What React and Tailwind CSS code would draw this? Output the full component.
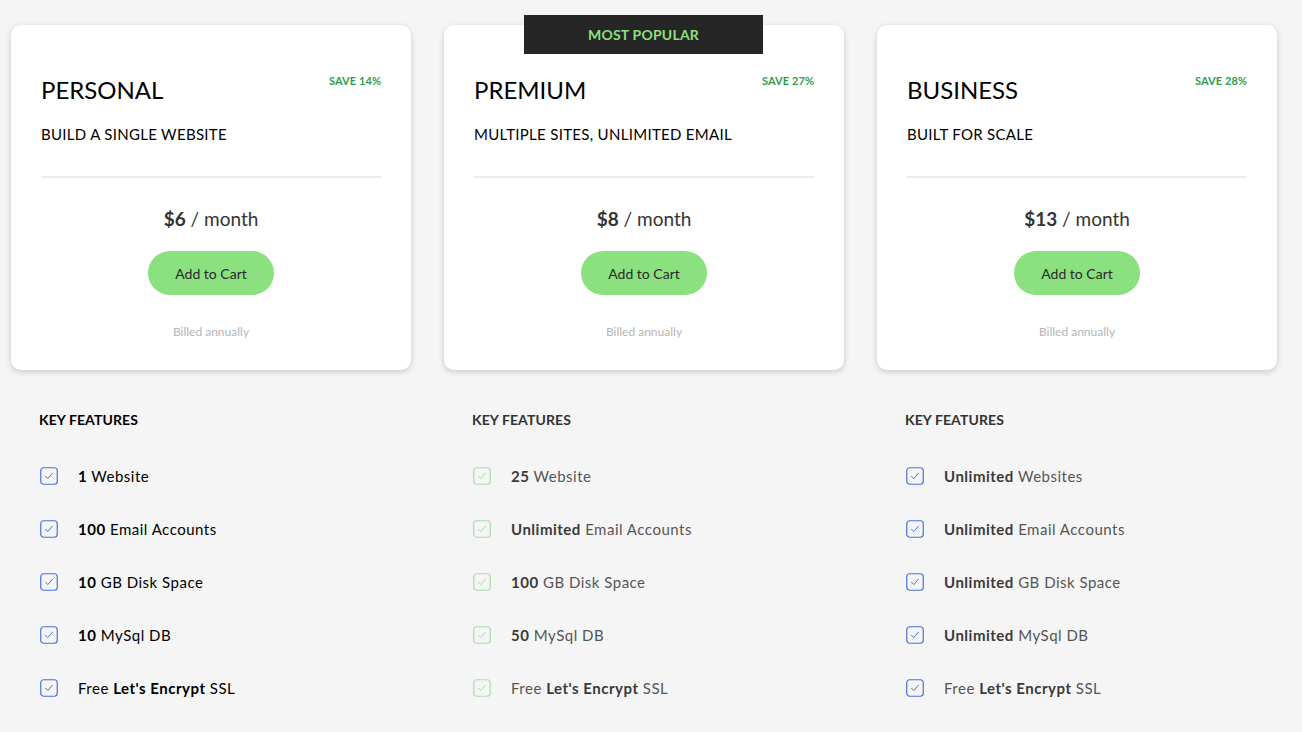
import React from "react";

const plans = [
  {
    name: "PERSONAL",
    tagline: "BUILD A SINGLE WEBSITE",
    save: "SAVE 14%",
    price: "$6",
    popular: false,
    tone: "dark",
    features: [
      ["1", " Website"],
      ["100", " Email Accounts"],
      ["10", " GB Disk Space"],
      ["10", " MySql DB"],
      [null, "Free ", "Let's Encrypt", " SSL"],
    ],
  },
  {
    name: "PREMIUM",
    tagline: "MULTIPLE SITES, UNLIMITED EMAIL",
    save: "SAVE 27%",
    price: "$8",
    popular: true,
    tone: "green",
    features: [
      ["25", " Website"],
      ["Unlimited", " Email Accounts"],
      ["100", " GB Disk Space"],
      ["50", " MySql DB"],
      [null, "Free ", "Let's Encrypt", " SSL"],
    ],
  },
  {
    name: "BUSINESS",
    tagline: "BUILT FOR SCALE",
    save: "SAVE 28%",
    price: "$13",
    popular: false,
    tone: "blue",
    features: [
      ["Unlimited", " Websites"],
      ["Unlimited", " Email Accounts"],
      ["Unlimited", " GB Disk Space"],
      ["Unlimited", " MySql DB"],
      [null, "Free ", "Let's Encrypt", " SSL"],
    ],
  },
];

const Check = ({ green }) => (
  <svg width="18" height="18" viewBox="0 0 18 18" fill="none" className="shrink-0">
    <rect
      x="0.75"
      y="0.75"
      width="16.5"
      height="16.5"
      rx="3"
      stroke={green ? "#a6dfa6" : "#4a72d6"}
      strokeWidth="1.2"
    />
    <path
      d="M5.5 9.3 L7.8 11.6 L12.4 6.2"
      stroke={green ? "#a6dfa6" : "#4a72d6"}
      strokeWidth="1"
      strokeLinecap="round"
      strokeLinejoin="round"
    />
  </svg>
);

const PlanCard = ({ plan }) => (
  <div className="relative bg-white rounded-[10px] shadow-[0_2px_6px_rgba(0,0,0,0.18)] px-[30px] pt-[50px] pb-[31px] flex flex-col">
    {plan.popular && (
      <div className="absolute top-[-10px] left-[80px] w-[239px] h-[39px] bg-[#262626] flex items-center justify-center text-[14px] font-bold text-[#8be07f] tracking-[0.2px]">
        MOST POPULAR
      </div>
    )}
    <div className="flex justify-between items-start">
      <h2 className="text-[24px] leading-[30px] text-black">{plan.name}</h2>
      <span className="text-[11px] leading-[12px] font-bold text-[#2e9d4e] tracking-[0.1px]">{plan.save}</span>
    </div>
    <p className="mt-[19px] text-[15px] leading-[20px] text-black tracking-[0.3px]">{plan.tagline}</p>
    <div className="mt-[32px] h-[2px] bg-[#ebebeb]" />
    <p className="mt-[29px] text-center text-[19px] leading-[24px] text-[#333]">
      <span className="font-bold">{plan.price}</span> / month
    </p>
    <button className="mt-[20px] mx-auto w-[126px] h-[44px] rounded-full bg-[#8be07f] text-[14px] text-[#2a2a2a]">
      Add to Cart
    </button>
    <p className="mt-[30px] text-center text-[12px] leading-[14px] text-[#b5b5b5]">Billed annually</p>
  </div>
);

const Features = ({ plan }) => {
  const dark = plan.tone === "dark";
  return (
    <div className="pl-[28px] pt-[42px]">
      <h3 className={`text-[14px] leading-[16px] font-bold tracking-[0.1px] ${dark ? "text-black" : "text-[#333]"}`}>
        KEY FEATURES
      </h3>
      <ul className="mt-[38px] flex flex-col gap-[33px]">
        {plan.features.map((f, i) => (
          <li key={i} className="flex items-center h-[20px]">
            <span className="ml-[1px]">
              <Check green={plan.tone === "green"} />
            </span>
            <span className={`ml-[20px] text-[15px] leading-[20px] tracking-[0.5px] ${dark ? "text-black" : "text-[#555]"}`}>
              {f[0] !== null ? (
                <>
                  <b className={dark ? "text-black" : "text-[#3a3a3a]"}>{f[0]}</b>
                  {f[1]}
                </>
              ) : (
                <>
                  {f[1]}
                  <b className={dark ? "text-black" : "text-[#3a3a3a]"}>{f[2]}</b>
                  {f[3]}
                </>
              )}
            </span>
          </li>
        ))}
      </ul>
    </div>
  );
};

const App = () => {
  return (
    <div className="min-h-[732px] bg-[#f5f5f5] font-['Lato',sans-serif] pl-[11px] pt-[25px]">
      <div className="grid grid-cols-[400px_400px_400px] gap-x-[33px]">
        {plans.map((p) => (
          <div key={p.name}>
            <PlanCard plan={p} />
            <Features plan={p} />
          </div>
        ))}
      </div>
    </div>
  );
};

export default App;
